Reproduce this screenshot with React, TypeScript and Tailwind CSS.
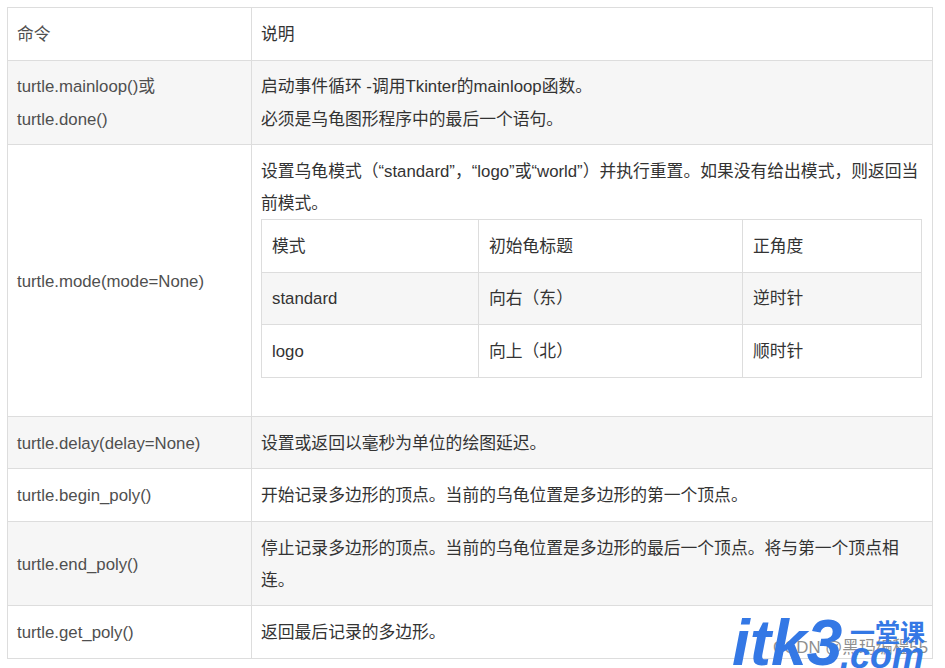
const font = { fontFamily: '"Liberation Sans", "Noto Sans CJK SC", sans-serif' };

const innerCell = "border border-[#dddddd] px-[10px] pt-[2px] pb-0 align-middle";
const cmdCell = "border border-[#dddddd] pl-[9px] pr-[10px] pt-[2px] pb-0 align-middle";
const descCell = "border border-[#dddddd] pl-[9px] pr-[10px] pt-[2px] pb-0 align-middle text-[#333333]";

function Row({ cmd, h, shaded, children }: { cmd: React.ReactNode; h: string; shaded?: boolean; children: React.ReactNode }) {
  return (
    <tr className={`${h} ${shaded ? "bg-[#f6f6f6]" : "bg-white"}`}>
      <td className={cmdCell}>{cmd}</td>
      <td className={descCell}>{children}</td>
    </tr>
  );
}

function ModeTable() {
  const plain = "border border-[#dddddd] px-[10px] py-0 align-middle";
  return (
    <table className="w-[660px] table-fixed border-collapse -mt-[1px]">
      <colgroup>
        <col className="w-[217px]" />
        <col className="w-[264px]" />
        <col className="w-[179px]" />
      </colgroup>
      <tbody>
        <tr className="h-[53px] bg-white">
          <td className={innerCell}>模式</td>
          <td className={innerCell}>初始龟标题</td>
          <td className={innerCell}>正角度</td>
        </tr>
        <tr className="h-[52px] bg-[#f6f6f6]">
          <td className={plain}>standard</td>
          <td className={plain}>向右（东）</td>
          <td className={plain}>逆时针</td>
        </tr>
        <tr className="h-[53px] bg-white">
          <td className={innerCell}>logo</td>
          <td className={innerCell}>向上（北）</td>
          <td className={innerCell}>顺时针</td>
        </tr>
      </tbody>
    </table>
  );
}

export default function App() {
  return (
    <div className="relative w-[945px] h-[668px] overflow-hidden bg-white pt-[7px] pl-[7px] text-[16.8px] leading-[32px] text-[#4f4f4f]" style={font}>
      <table className="w-[925px] table-fixed border-collapse">
        <colgroup>
          <col className="w-[244px]" />
          <col className="w-[681px]" />
        </colgroup>
        <tbody>
          <tr className="h-[53px] bg-white">
            <td className={cmdCell}>命令</td>
            <td className={`${descCell} text-[#4f4f4f]`}>说明</td>
          </tr>
          <tr className="h-[84px] bg-[#f6f6f6]">
            <td className="border border-[#dddddd] pl-[9px] pr-[10px] py-0 align-middle leading-[33px]">turtle.mainloop()或<br />turtle.done()</td>
            <td className="border border-[#dddddd] pl-[9px] pr-[10px] py-0 align-middle leading-[33px] text-[#333333]">
              启动事件循环 -调用Tkinter的mainloop函数。<br />必须是乌龟图形程序中的最后一个语句。
            </td>
          </tr>
          <tr className="h-[272px] bg-white">
            <td className={cmdCell}>turtle.mode(mode=None)</td>
            <td className="border border-[#dddddd] pl-[9px] pr-[10px] pt-[11px] pb-0 align-top text-[#333333]">
              设置乌龟模式（“standard”，“logo”或“world”）并执行重置。如果没有给出模式，则返回当前模式。
              <ModeTable />
            </td>
          </tr>
          <Row h="h-[52px]" shaded cmd="turtle.delay(delay=None)">设置或返回以毫秒为单位的绘图延迟。</Row>
          <Row h="h-[53px]" cmd="turtle.begin_poly()">开始记录多边形的顶点。当前的乌龟位置是多边形的第一个顶点。</Row>
          <Row h="h-[84px]" shaded cmd="turtle.end_poly()">停止记录多边形的顶点。当前的乌龟位置是多边形的最后一个顶点。将与第一个顶点相连。</Row>
          <Row h="h-[53px]" cmd="turtle.get_poly()">返回最后记录的多边形。</Row>
        </tbody>
      </table>

      <span className="absolute left-[773px] top-[636px] text-[16.8px] leading-[24px] whitespace-nowrap text-[#8f8f8f]">CSDN @黑玛编程55</span>
      <span className="absolute left-[732px] top-[607px] text-[64px] leading-[72px] font-bold italic text-[#3478e5]">itk3</span>
      <span className="absolute left-[850px] top-[617px] text-[25px] leading-[32px] font-bold whitespace-nowrap text-[#3478e5]">一堂课</span>
      <span className="absolute left-[840px] top-[636px] text-[36px] leading-[40px] font-bold italic text-[#3478e5]">.com</span>
    </div>
  );
}
